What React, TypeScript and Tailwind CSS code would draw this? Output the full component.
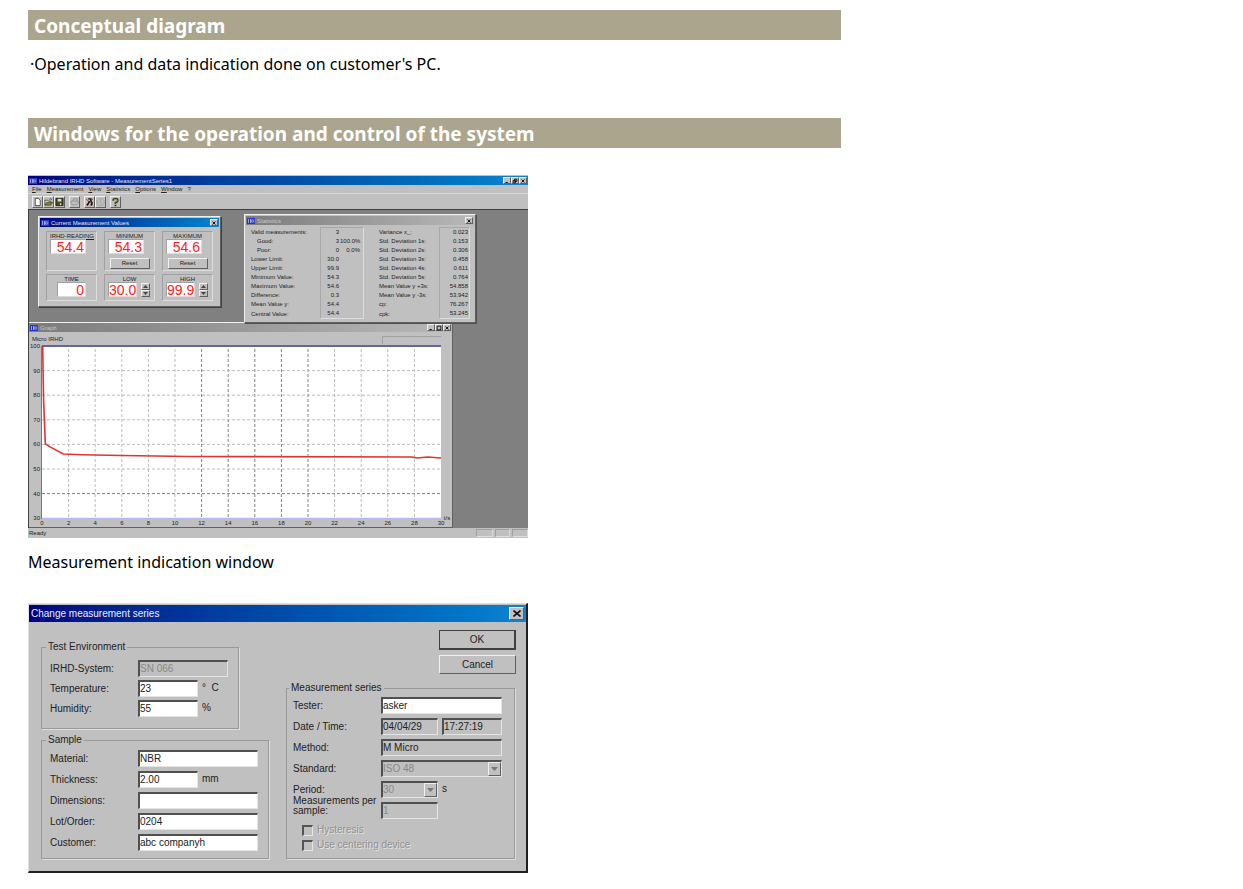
import React from "react";
import clsx from "clsx";

const raised =
  "border border-t-[#f0f0f0] border-l-[#f0f0f0] border-r-[#606060] border-b-[#606060] bg-[#c0c0c0]";
const sunken =
  "border border-t-[#a0a0a0] border-l-[#a0a0a0] border-r-[#dcdcdc] border-b-[#dcdcdc]";
const field =
  "h-[17px] min-w-0 border-t-2 border-l-2 border-r border-b border-t-[#505050] border-l-[#505050] border-r-[#e4e4e4] border-b-[#e4e4e4]";

/* ---------- shared window parts ---------- */

const AppIcon = () => (
  <svg viewBox="0 0 8 6" className="w-2 h-[6px] shrink-0" aria-hidden="true">
    <rect width="8" height="6" fill="#2438c0" />
    <path d="M1.5 1v4M3.5 1v4M3.5 3h1.5M5 1v4M6.8 1.5v3" stroke="#c4ccf4" strokeWidth=".7" />
  </svg>
);

const controlPaths = {
  minimize: "M2 6h3",
  restore: "M3.5 1.5h3v3h-3zM1.5 3.5h3v3h-3z",
  maximize: "M1.5 1.5h5v5h-5z",
  close: "M2 2l4 4M6 2l-4 4",
};

const Control = ({ kind }: { kind: keyof typeof controlPaths }) => (
  <button aria-label={kind} className={clsx(raised, "w-2 h-[7px] flex items-center justify-center")}>
    <svg viewBox="0 0 8 8" className="w-[6px] h-[6px]" fill="none" stroke="#111" strokeWidth="1.3">
      <path d={controlPaths[kind]} />
    </svg>
  </button>
);

interface TitleBarProps {
  title: string;
  active?: boolean;
  controls: (keyof typeof controlPaths)[];
}

const TitleBar = ({ title, active, controls }: TitleBarProps) => (
  <div
    className={clsx(
      "h-[9px] flex items-center gap-[2px] px-px bg-linear-to-r",
      active ? "from-[#000080] to-[#1084d0] text-[#e4e8ff]" : "from-[#7c7c7c] to-[#b8b8b8] text-[#c8c8c8]"
    )}
  >
    <AppIcon />
    <span className="flex-1 whitespace-nowrap">{title}</span>
    <div className="flex">
      {controls.map((kind) => (
        <Control key={kind} kind={kind} />
      ))}
    </div>
  </div>
);

/* ---------- measurement window ---------- */

const menu = ["File", "Measurement", "View", "Statistics", "Options", "Window", "?"];

const toolGroups = [
  [
    {
      name: "New",
      icon: <path d="M2.5 1h3.5l2 2v6h-5.5z" fill="#fff" stroke="#222" strokeWidth=".8" />,
    },
    {
      name: "Open",
      icon: (
        <>
          <path d="M1 8.5V3h3l1 1h2.5v1.5" fill="#e8e080" stroke="#333" strokeWidth=".8" />
          <path d="M1 8.5l2-3h6.5l-2 3z" fill="#8c8c10" stroke="#333" strokeWidth=".8" />
          <path d="M6 2q1.5-1.5 3 .5" fill="none" stroke="#222" strokeWidth=".8" />
        </>
      ),
    },
    {
      name: "Save",
      icon: (
        <>
          <path d="M1 1h8v8H1z" fill="#4c4c20" stroke="#111" strokeWidth=".8" />
          <path d="M3 1.5h4v3H3z" fill="#d8d8d8" />
          <path d="M5.5 6.5h1.5v2H5.5z" fill="#d8d8d8" />
        </>
      ),
    },
  ],
  [
    {
      name: "Print",
      icon: <path d="M1 6.5V4h8v2.5L7.5 8H2.5zM3 4l1-2.5h4L7.5 4" fill="none" stroke="#909090" strokeWidth=".9" />,
    },
  ],
  [
    {
      name: "Start",
      icon: (
        <>
          <path d="M1 1.5l8 7M9 1.5L1 8.5" stroke="#b02020" strokeWidth=".9" />
          <path d="M3.5 1.5h3v2.5L8 6l-1.5 3M5 4L2.5 9" fill="none" stroke="#111" strokeWidth="1.5" />
        </>
      ),
    },
    {
      name: "Stop",
      icon: <path d="M3 1.5h4l2 2v3l-2 2H3l-2-2v-3zM5 3v2.5h1.5" fill="none" stroke="#a0a0a0" strokeWidth=".9" />,
    },
  ],
  [
    {
      name: "Help",
      icon: (
        <>
          <path d="M2.5 3.5q0-2.2 2.5-2.2t2.5 1.9q0 1.3-2.5 2.5V7" fill="none" stroke="#303000" strokeWidth="2" />
          <path d="M3 3.3q.2-1.5 2-1.5t2 1.4q0 1-2 2" fill="none" stroke="#d0d020" strokeWidth=".7" />
          <path d="M4 8h2v1.6H4z" fill="#303000" />
        </>
      ),
    },
  ],
];

const Toolbar = () => (
  <div className="h-4 flex items-center gap-1 px-1 border-t border-t-[#d8d8d8]">
    {toolGroups.map((group, i) => (
      <div key={i} className="flex">
        {group.map((tool) => (
          <button key={tool.name} aria-label={tool.name} className={clsx(raised, "w-[11px] h-3")}>
            <svg viewBox="0 0 10 10" className="w-[9px] h-[10px]">
              {tool.icon}
            </svg>
          </button>
        ))}
      </div>
    ))}
  </div>
);

interface ReadingProps {
  label: string;
  value: string;
  reset?: boolean;
  stepper?: boolean;
  small?: boolean;
}

const Reading = ({ label, value, reset, stepper, small }: ReadingProps) => (
  <div className={clsx(sunken, "px-[3px] pt-px overflow-hidden", small ? "h-[27px]" : "h-10")}>
    <div className="text-center underline leading-[6px] whitespace-nowrap">{label}</div>
    <div className={clsx("flex items-center gap-1", small && !stepper && "justify-center")}>
      <output
        className={clsx(
          sunken,
          "h-[15px] bg-white text-[#ff2020] text-[14px] leading-[14px] text-right pr-px",
          small ? "w-[29px]" : "w-9"
        )}
      >
        {value}
      </output>
      {stepper && (
        <div className="flex flex-col">
          <button aria-label={`${label} up`} className={clsx(raised, "w-[9px] h-[7px] flex items-center justify-center")}>
            <svg viewBox="0 0 5 3" className="w-[5px] h-[3px]"><path d="M0 3l2.5-3L5 3z" fill="#444" /></svg>
          </button>
          <button aria-label={`${label} down`} className={clsx(raised, "w-[9px] h-[7px] flex items-center justify-center")}>
            <svg viewBox="0 0 5 3" className="w-[5px] h-[3px]"><path d="M0 0l2.5 3L5 0z" fill="#444" /></svg>
          </button>
        </div>
      )}
    </div>
    {reset && <button className={clsx(raised, "block w-10 h-[11px] mt-1 mx-auto leading-[9px]")}>Reset</button>}
  </div>
);

const CurrentValues = () => (
  <section className={clsx(raised, "absolute left-[9px] top-[6px] w-[183px] h-[91px] p-px shadow-[1px_1px_0_#404040]")}>
    <TitleBar title="Current Measurement Values" active controls={["close"]} />
    <div className="grid grid-cols-3 gap-x-[7px] gap-y-[3px] px-[6px] pt-1">
      <Reading label="IRHD-READING" value="54.4" />
      <Reading label="MINIMUM" value="54.3" reset />
      <Reading label="MAXIMUM" value="54.6" reset />
      <Reading label="TIME" value="0" small />
      <Reading label="LOW" value="30.0" small stepper />
      <Reading label="HIGH" value="99.9" small stepper />
    </div>
  </section>
);

const statistics = [
  ["Valid measurements:", "3", "", "Variance x_:", "0.023"],
  ["Good:", "3", "100.0%", "Std. Deviation 1s:", "0.153"],
  ["Poor:", "0", "0.0%", "Std. Deviation 2s:", "0.306"],
  ["Lower Limit:", "30.0", "", "Std. Deviation 3s:", "0.458"],
  ["Upper Limit:", "99.9", "", "Std. Deviation 4s:", "0.611"],
  ["Minimum Value:", "54.3", "", "Std. Deviation 5s:", "0.764"],
  ["Maximum Value:", "54.6", "", "Mean Value y +3s:", "54.858"],
  ["Difference:", "0.3", "", "Mean Value y -3s:", "53.942"],
  ["Mean Value y:", "54.4", "", "cp:", "76.267"],
  ["Central Value:", "54.4", "", "cpk:", "53.245"],
];

const Statistics = () => (
  <section className={clsx(raised, "absolute left-[215px] top-1 w-[232px] h-[109px] p-px shadow-[1px_1px_0_#505050]")}>
    <TitleBar title="Statistics" controls={["close"]} />
    <table className="ml-[5px] mt-[2px] w-[219px] table-fixed border-separate border-spacing-0 leading-[9px] text-right">
      <colgroup>
        <col className="w-[69px]" />
        <col className="w-5" />
        <col className="w-6" />
        <col className="w-[75px]" />
        <col className="w-[31px]" />
      </colgroup>
      <tbody>
        {statistics.map(([label, value, percent, label2, value2], i) => {
          const edge = clsx(
            "border-[#a8a8a8]",
            i === 0 && "border-t",
            i === statistics.length - 1 && "border-b border-b-[#dcdcdc]"
          );
          return (
            <tr key={label}>
              <th className={clsx("text-left font-normal whitespace-nowrap h-[9px]", (i === 1 || i === 2) && "pl-[6px]")}>
                {label}
              </th>
              <td className={clsx(edge, "border-l pr-px")}>{value}</td>
              <td className={clsx(edge, "border-r border-r-[#dcdcdc] pr-[3px]")}>{percent}</td>
              <th className="text-left font-normal whitespace-nowrap pl-[15px]">{label2}</th>
              <td className={clsx(edge, "border-x border-r-[#dcdcdc] pr-px")}>{value2}</td>
            </tr>
          );
        })}
      </tbody>
    </table>
  </section>
);

const toX = (seconds: number) => 13 + seconds * 13.3;
const toY = (irhd: number) => 14 + (100 - irhd) * 2.46;

const curve = [
  [0.05, 100],
  [0.12, 78],
  [0.25, 60.2],
  [0.6, 59],
  [1.6, 56.1],
  [3, 55.8],
  [6, 55.5],
  [11, 55.1],
  [27.8, 54.9],
  [28.2, 54.5],
  [29, 54.9],
  [30, 54.5],
];

const Graph = () => (
  <section className={clsx(raised, "absolute left-0 top-[112px] w-[424px] h-[206px] border-l-0")}>
    <TitleBar title="Graph" controls={["minimize", "maximize", "close"]} />
    <svg viewBox="0 0 423 195" className="block w-full h-[195px] text-[6px]" fill="#222">
      <text x="3" y="9">Micro IRHD</text>
      <path d="M353.5 12V4.5H412" fill="none" stroke="#a0a0a0" />
      <rect x="13" y="14" width="399" height="173" fill="#fff" />
      <g strokeDasharray="3 2">
        {Array.from({ length: 14 }, (_, i) => (i + 1) * 2).map((s) => (
          <path key={s} d={`M${toX(s)} 17V186`} stroke={s >= 12 && s <= 20 ? "#808080" : "#bcbcbc"} />
        ))}
        {[90, 80, 70, 60, 50, 40].map((v) => (
          <path key={v} d={`M13 ${toY(v)}H412`} stroke={v === 40 ? "#808080" : "#bcbcbc"} />
        ))}
      </g>
      <path d="M13 14H412" stroke="#6464a8" strokeWidth="2" />
      <path d="M13 186.5H412" stroke="#b8b8f0" strokeWidth="1.5" />
      <path d="M12.5 14V187" stroke="#777" />
      <polyline
        points={curve.map(([s, v]) => `${toX(s)},${toY(v)}`).join(" ")}
        fill="none"
        stroke="#e03434"
        strokeWidth="1.6"
      />
      <g textAnchor="end">
        {[100, 90, 80, 70, 60, 50, 40, 30].map((v) => (
          <text key={v} x="11" y={toY(v) + 2}>{v}</text>
        ))}
      </g>
      <g textAnchor="middle">
        {Array.from({ length: 16 }, (_, i) => i * 2).map((s) => (
          <text key={s} x={toX(s)} y="193">{s}</text>
        ))}
        <text x="418" y="188">t/s</text>
      </g>
    </svg>
  </section>
);

const MeasurementWindow = () => (
  <div className="w-full max-w-[500px] bg-[#c0c0c0] pt-px text-[6px] leading-[8px] text-[#222] overflow-hidden">
    <TitleBar
      title="Hildebrand IRHD Software - MeasurementSeries1"
      active
      controls={["minimize", "restore", "close"]}
    />
    <nav className="h-2 flex items-center gap-[5px] px-1">
      {menu.map((item) => (
        <button key={item} className="first-letter:underline">
          {item}
        </button>
      ))}
    </nav>
    <Toolbar />
    <div className="relative h-[319px] bg-[#808080] border-t border-l border-[#404040] overflow-hidden">
      <Graph />
      <CurrentValues />
      <Statistics />
    </div>
    <footer className="h-[10px] flex items-center gap-[2px] pl-px">
      <span className="flex-1">Ready</span>
      <span className={clsx(sunken, "w-[17px] h-2")} />
      <span className={clsx(sunken, "w-[15px] h-2")} />
      <span className={clsx(sunken, "w-4 h-2")} />
    </footer>
  </div>
);

/* ---------- series dialog ---------- */

interface GroupProps {
  title: string;
  className?: string;
  children: React.ReactNode;
}

const Group = ({ title, className, children }: GroupProps) => (
  <fieldset className={clsx("min-w-0 border border-[#999] shadow-[1px_1px_0_#dedede]", className)}>
    <legend className="px-[2px] -ml-1 leading-[12px] bg-[#c0c0c0]">{title}</legend>
    {children}
  </fieldset>
);

interface RowProps {
  id: string;
  label: string;
  children: React.ReactNode;
}

const Row = ({ id, label, children }: RowProps) => (
  <div className="h-[17px] flex items-end gap-1">
    <label htmlFor={id} className="w-[84px] shrink-0 leading-[10px] pb-[3px]">
      {label}
    </label>
    {children}
  </div>
);

interface ComboProps {
  id: string;
  value: string;
  className: string;
}

const Combo = ({ id, value, className }: ComboProps) => (
  <div className={clsx(field, "flex", className)}>
    <select id={id} disabled defaultValue={value} className="appearance-none flex-1 min-w-0 text-[#888] leading-[14px] opacity-100">
      <option>{value}</option>
    </select>
    <span className={clsx(raised, "w-[13px] flex items-center justify-center")}>
      <svg viewBox="0 0 7 4" className="w-[7px] h-1"><path d="M0 0h7L3.5 4z" fill="#777" /></svg>
    </span>
  </div>
);

const inputStyle = clsx(field, "pb-px");

const sample = [
  { id: "material", label: "Material:", value: "NBR" },
  { id: "thickness", label: "Thickness:", value: "2.00", unit: "mm" },
  { id: "dimensions", label: "Dimensions:", value: "" },
  { id: "lot", label: "Lot/Order:", value: "0204" },
  { id: "customer", label: "Customer:", value: "abc companyh" },
];

const SeriesDialog = () => (
  <form
    onSubmit={(e) => e.preventDefault()}
    className="w-full max-w-[500px] bg-[#c0c0c0] border-t border-l border-[#e0e0e0] border-r-2 border-b-2 border-r-[#202020] border-b-[#202020] pt-px text-[10px] leading-[12px] text-[#222]"
  >
    <div className="h-[17px] flex items-center justify-between px-[2px] bg-linear-to-r from-[#000080] to-[#1084d0] text-[#eef]">
      <h2>Change measurement series</h2>
      <button type="button" aria-label="Close" className={clsx(raised, "w-[15px] h-[13px] flex items-center justify-center")}>
        <svg viewBox="0 0 8 7" className="w-2 h-[7px]"><path d="M.5 .5l7 6M7.5 .5l-7 6" stroke="#111" strokeWidth="1.6" /></svg>
      </button>
    </div>

    <div className="flex gap-[17px] pl-3 pr-[10px] pt-2 pb-3">
      <div className="flex-1 min-w-0 flex flex-col gap-[5px] pt-[11px]">
        <Group title="Test Environment" className="w-[198px] pl-2 pt-[7px] pb-[11px]">
          <div className="flex flex-col gap-[3px]">
            <Row id="system" label="IRHD-System:">
              <input id="system" disabled defaultValue="SN 066" className={clsx(inputStyle, "w-[90px] text-[#888]")} />
            </Row>
            <Row id="temperature" label="Temperature:">
              <input id="temperature" defaultValue="23" className={clsx(inputStyle, "w-[60px] bg-white")} />
              <span className="pb-[3px]">°&nbsp; C</span>
            </Row>
            <Row id="humidity" label="Humidity:">
              <input id="humidity" defaultValue="55" className={clsx(inputStyle, "w-[60px] bg-white")} />
              <span className="pb-[3px]">%</span>
            </Row>
          </div>
        </Group>

        <Group title="Sample" className="pl-2 pr-[10px] pt-1 pb-[7px]">
          <div className="flex flex-col gap-1">
            {sample.map(({ id, label, value, unit }) => (
              <Row key={id} id={id} label={label}>
                <input
                  id={id}
                  defaultValue={value}
                  className={clsx(inputStyle, "bg-white", unit ? "w-[60px]" : "flex-1")}
                />
                {unit && <span className="pb-[3px]">{unit}</span>}
              </Row>
            ))}
          </div>
        </Group>
      </div>

      <div className="w-[230px] flex flex-col">
        <button type="submit" className="self-end w-[77px] h-5 border border-[#404040] border-r-2 border-b-2 bg-[#c0c0c0]">
          OK
        </button>
        <button type="button" className={clsx(raised, "self-end w-[77px] h-[19px] mt-[5px]")}>
          Cancel
        </button>

        <Group title="Measurement series" className="mt-2 w-[229px] pl-[6px] pr-3 pt-[3px] pb-[7px]">
          <div className="flex flex-col gap-1">
            <Row id="tester" label="Tester:">
              <input id="tester" defaultValue="asker" className={clsx(inputStyle, "flex-1 bg-white")} />
            </Row>
            <Row id="date" label="Date / Time:">
              <input id="date" readOnly defaultValue="04/04/29" className={clsx(inputStyle, "w-[57px]")} />
              <input id="time" readOnly aria-label="Time" defaultValue="17:27:19" className={clsx(inputStyle, "flex-1")} />
            </Row>
            <Row id="method" label="Method:">
              <input id="method" readOnly defaultValue="M Micro" className={clsx(inputStyle, "flex-1")} />
            </Row>
            <Row id="standard" label="Standard:">
              <Combo id="standard" value="ISO 48" className="flex-1" />
            </Row>
            <Row id="period" label="Period:">
              <Combo id="period" value="30" className="w-[57px]" />
              <span className="pb-[3px]">s</span>
            </Row>
            <Row id="count" label="Measurements per sample:">
              <input id="count" disabled defaultValue="1" className={clsx(inputStyle, "w-[57px] text-[#888]")} />
            </Row>
          </div>
          <div className="flex flex-col gap-[3px] mt-[5px] ml-[9px]">
            {["Hysteresis", "Use centering device"].map((option) => (
              <label key={option} className="flex items-center gap-1 text-[#909090] [text-shadow:1px_1px_0_#e4e4e4]">
                <input type="checkbox" disabled className="appearance-none w-[11px] h-[11px] border-t-2 border-l-2 border-r border-b border-t-[#555] border-l-[#555] border-r-[#e4e4e4] border-b-[#e4e4e4]" />
                {option}
              </label>
            ))}
          </div>
        </Group>
      </div>
    </div>
  </form>
);

/* ---------- page ---------- */

const Heading = ({ children }: { children: React.ReactNode }) => (
  <h1 className="bg-[#aca58d] text-white font-bold text-[19px] leading-7 pt-[2px] px-[6px]">{children}</h1>
);

const App = () => {
  return (
    <main className="max-w-[841px] pl-7 pt-[10px] pb-4 bg-white text-black font-['Noto_Sans',sans-serif]">
      <Heading>Conceptual diagram</Heading>
      <p className="mt-3 pl-[2px] text-[16px] leading-6">
        ·Operation and data indication done on customer's PC.
      </p>
      <div className="mt-[42px]">
        <Heading>Windows for the operation and control of the system</Heading>
      </div>
      <figure className="mt-[27px]">
        <div className="font-['Liberation_Sans',sans-serif]">
          <MeasurementWindow />
        </div>
        <figcaption className="mt-3 text-[16px] leading-6">Measurement indication window</figcaption>
      </figure>
      <div className="mt-[29px] font-['Liberation_Sans',sans-serif]">
        <SeriesDialog />
      </div>
    </main>
  );
};

export default App;
